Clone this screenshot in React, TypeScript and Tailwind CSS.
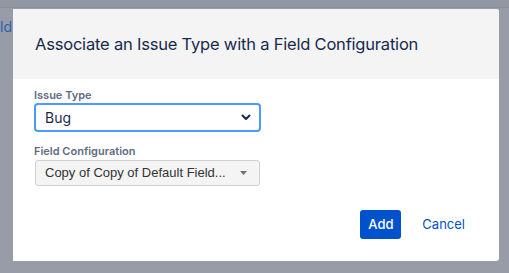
import React from 'react';

export default function App() {
  return (
    <div className="relative w-[509px] h-[273px] overflow-hidden bg-[#979ca7] font-['Inter',sans-serif]">
      <div className="h-[8px] bg-[#9297a2] border-b border-[#8a8f9b]" />
      <span className="absolute left-0 top-[16px] text-[14px] text-[#2d5fb0]">ld</span>
      <div className="absolute left-[13px] top-[9px] w-[486px] h-[252px] bg-white rounded-r-[3px] flex flex-col">
        <div className="h-[70px] bg-[#f4f4f4] flex items-center px-[22px] rounded-tr-[3px]">
          <h2 className="text-[16.5px] text-[#172b4d] tracking-[-0.2px]">Associate an Issue Type with a Field Configuration</h2>
        </div>
        <div className="flex-1 px-[21px] pt-[10px] flex flex-col">
          <label className="text-[11px] font-semibold text-[#5e6c84] leading-[13px]">Issue Type</label>
          <div className="mt-[1px] w-[227px] h-[29px] border-2 border-[#4c9aff] rounded-[4px] flex items-center justify-between pl-[9px] pr-[8px]">
            <span className="text-[14px] text-[#172b4d]">Bug</span>
            <svg width="10" height="7" viewBox="0 0 10 7">
              <path d="M1.5 1.5 L5 5 L8.5 1.5" fill="none" stroke="#172b4d" strokeWidth="2" strokeLinecap="round" strokeLinejoin="round" />
            </svg>
          </div>
          <label className="mt-[13px] text-[11px] font-semibold text-[#5e6c84] leading-[13px]">Field Configuration</label>
          <div className="mt-[2px] ml-[1px] w-[225px] h-[26px] bg-[#f4f4f4] border border-[#cfd1d4] rounded-[3px] flex items-center justify-between pl-[9px] pr-[12px]">
            <span className="text-[13px] text-[#333] font-['Liberation_Sans',sans-serif]">Copy of Copy of Default Field...</span>
            <svg width="7" height="4" viewBox="0 0 7 4">
              <path d="M0 0 L7 0 L3.5 4 Z" fill="#707070" />
            </svg>
          </div>
          <div className="flex-1" />
          <div className="flex justify-end items-center gap-[21px] pr-[13px] pb-[22px]">
            <button className="w-[41px] h-[29px] rounded-[3px] bg-[#0052cc] text-white text-[13px] font-medium">Add</button>
            <button className="text-[13px] text-[#0052cc]">Cancel</button>
          </div>
        </div>
      </div>
    </div>
  );
}
